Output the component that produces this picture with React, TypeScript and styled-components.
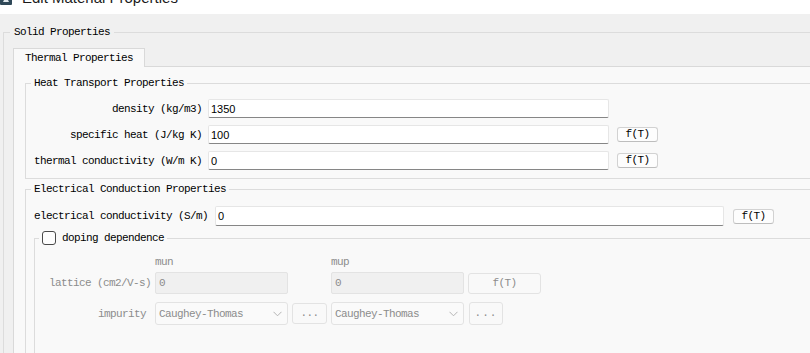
import styled, { createGlobalStyle } from 'styled-components'

const MONO = `"Liberation Mono", "DejaVu Sans Mono", monospace`
const SANS = `"Liberation Sans", Arial, sans-serif`

const GlobalStyle = createGlobalStyle`
  html, body {
    margin: 0;
    padding: 0;
    background: #f0f0f0;
    overflow: hidden;
  }
  body {
    width: 810px;
    height: 353px;
    font-family: ${MONO};
    font-size: 11px;
    letter-spacing: -0.6px;
    color: #000;
  }
`

export default function App() {
    return (
        <>
            <GlobalStyle />
            <TitleBar>
                <AppIcon width="12" height="12" viewBox="0 0 12 12" aria-hidden="true">
                    <rect x="0" y="0" width="12" height="12" rx="1" fill="#2f4858" />
                    <path d="M3 9 L6 3 L9 9 Z" fill="#dfe7ec" />
                </AppIcon>
                <TitleText>Edit Material Properties</TitleText>
            </TitleBar>

            <SolidGroup>
                <SolidLegend>Solid Properties</SolidLegend>
                <TabBar>
                    <Tab>Thermal Properties</Tab>
                    <TabFiller />
                </TabBar>
                <TabPane>
                    <HeatGroup>
                        <Legend>Heat Transport Properties</Legend>
                        <FormGrid $columns="168px 401px 41px">
                            <FieldLabel>density (kg/m3)</FieldLabel>
                            <TextField readOnly defaultValue="1350" />
                            <span />
                            <FieldLabel>specific heat (J/kg K)</FieldLabel>
                            <TextField readOnly defaultValue="100" />
                            <FnButton>f(T)</FnButton>
                            <FieldLabel>thermal conductivity (W/m K)</FieldLabel>
                            <TextField readOnly defaultValue="0" />
                            <FnButton>f(T)</FnButton>
                        </FormGrid>
                    </HeatGroup>

                    <ElectricalGroup>
                        <Legend>Electrical Conduction Properties</Legend>
                        <FormGrid $columns="174px 509px 41px" $gap={7} $rowHeight={20}>
                            <FieldLabel>electrical conductivity (S/m)</FieldLabel>
                            <TextField readOnly defaultValue="0" />
                            <FnButton>f(T)</FnButton>
                        </FormGrid>

                        <DopingGroup>
                            <DopingLegend>
                                <LegendInner>
                                    <CheckBox />
                                    doping dependence
                                </LegendInner>
                            </DopingLegend>
                            <DopingRow $height={12}>
                                <span />
                                <ColumnHead>mun</ColumnHead>
                                <span />
                                <ColumnHead>mup</ColumnHead>
                            </DopingRow>
                            <DopingRow $height={22} $top={4}>
                                <DimLabel>lattice (cm2/V-s)</DimLabel>
                                <DimField>0</DimField>
                                <span />
                                <DimField>0</DimField>
                                <DimButton>f(T)</DimButton>
                            </DopingRow>
                            <DopingRow $height={23} $top={8}>
                                <DimLabel $inset={5}>impurity</DimLabel>
                                <Combo>
                                    Caughey-Thomas
                                    <Chevron width="9" height="6" viewBox="0 0 9 6" aria-hidden="true">
                                        <path d="M0.5 0.8 L4.5 4.8 L8.5 0.8" fill="none" stroke="#b4b4b4" strokeWidth="1" />
                                    </Chevron>
                                </Combo>
                                <DimButton>...</DimButton>
                                <Combo>
                                    Caughey-Thomas
                                    <Chevron width="9" height="6" viewBox="0 0 9 6" aria-hidden="true">
                                        <path d="M0.5 0.8 L4.5 4.8 L8.5 0.8" fill="none" stroke="#b4b4b4" strokeWidth="1" />
                                    </Chevron>
                                </Combo>
                                <DimButton $narrow>...</DimButton>
                            </DopingRow>
                        </DopingGroup>
                    </ElectricalGroup>
                </TabPane>
            </SolidGroup>
        </>
    )
}


/*___Styling___*/

const TitleBar = styled.div`
    height: 14px;
    background: #fff;
    overflow: hidden;
    display: flex;
    align-items: flex-start;
`

const AppIcon = styled.svg`
    margin-top: -7px;
    flex: none;
`

const TitleText = styled.span`
    margin: -10px 0 0 10px;
    font-family: ${SANS};
    font-size: 15px;
    line-height: 15px;
    letter-spacing: 0;
    color: #1a1a1a;
`

const GroupBase = styled.fieldset`
    border: none;
    border-top: 1px solid #dcdcdc;
    border-left: 1px solid #dcdcdc;
    min-inline-size: 0;
    margin: 0;
`

const SolidGroup = styled(GroupBase)`
    margin: 12px 0 0 3px;
    padding: 9px 0 0 9px;
`

/* legends sit inside the fieldset's padding, so the offsets are negative */
const Legend = styled.legend`
    margin-left: -3px;
    padding: 0 3px;
    line-height: 13px;
`

const SolidLegend = styled(Legend)`
    margin-left: -3px;
    padding: 0 4px;
`

const TabBar = styled.div`
    display: flex;
    height: 19px;
`

const Tab = styled.div`
    background: #f9f9f9;
    border: 1px solid #d9d9d9;
    border-bottom: none;
    padding: 0 11px;
    line-height: 18px;
    white-space: nowrap;
`

const TabFiller = styled.div`
    flex: 1;
    border-bottom: 1px solid #d9d9d9;
`

const TabPane = styled.div`
    background: #f9f9f9;
    border-left: 1px solid #d9d9d9;
    padding: 10px 0 0 11px;
    height: 300px;
`

const HeatGroup = styled(GroupBase)`
    border-bottom: 1px solid #dcdcdc;
    padding: 9px 0 8px 8px;
`

const ElectricalGroup = styled(GroupBase)`
    margin-top: 4px;
    padding: 10px 0 0 8px;
    height: 200px;
`

const FormGrid = styled.div<{ $columns: string; $gap?: number; $rowHeight?: number }>`
    display: grid;
    grid-template-columns: ${p => p.$columns};
    grid-auto-rows: ${p => p.$rowHeight ?? 19}px;
    column-gap: ${p => p.$gap ?? 6}px;
    row-gap: 7px;
    align-items: center;
`

const FieldLabel = styled.span`
    text-align: right;
    white-space: nowrap;
`

const TextField = styled.input`
    box-sizing: border-box;
    height: 100%;
    width: 100%;
    margin: 0;
    padding: 0 2px;
    background: #fff;
    border: 1px solid #e6e6e6;
    border-bottom-color: #868686;
    border-radius: 2px;
    font-family: ${SANS};
    font-size: 11px;
    color: #000;
    outline: none;
`

const FnButton = styled.button`
    box-sizing: border-box;
    height: 15px;
    width: 41px;
    margin: 0 0 0 2px;
    padding: 0;
    background: #fdfdfd;
    border: 1px solid #d2d2d2;
    border-bottom-color: #bdbdbd;
    border-radius: 3px;
    font-family: ${MONO};
    font-size: 11px;
    letter-spacing: -0.6px;
    line-height: 13px;
    color: #000;
`

const DopingGroup = styled(GroupBase)`
    margin-top: 5px;
    padding: 11px 0 0 0;
    height: 150px;
`

const DopingLegend = styled.legend`
    margin-left: 4px;
    padding: 0 3px;
    line-height: 14px;
`

const LegendInner = styled.span`
    display: flex;
    align-items: center;
    gap: 6px;
`

const CheckBox = styled.span`
    box-sizing: border-box;
    width: 14px;
    height: 14px;
    border: 1px solid #4a4a4a;
    border-radius: 3px;
    background: #fdfdfd;
`

const DopingRow = styled.div<{ $height: number; $top?: number }>`
    display: grid;
    grid-template-columns: 116px 133px 35px 133px 73px;
    column-gap: 4px;
    height: ${p => p.$height}px;
    margin-top: ${p => p.$top ?? 0}px;
    align-items: center;
    color: #8c8c8c;
`

const ColumnHead = styled.span`
    line-height: 12px;
`

const DimLabel = styled.span<{ $inset?: number }>`
    text-align: right;
    white-space: nowrap;
    padding-right: ${p => p.$inset ?? 0}px;
`

const DimField = styled.div`
    box-sizing: border-box;
    height: 22px;
    padding: 0 3px;
    line-height: 20px;
    background: #f0f0f0;
    border: 1px solid #e3e3e3;
    border-radius: 2px;
`

const DimButton = styled.div<{ $narrow?: boolean }>`
    box-sizing: border-box;
    height: ${p => (p.$narrow ? 23 : 21)}px;
    width: ${p => (p.$narrow ? '34px' : '100%')};
    margin-left: ${p => (p.$narrow ? 1 : 0)}px;
    line-height: ${p => (p.$narrow ? 21 : 19)}px;
    text-align: center;
    background: #f9f9f9;
    border: 1px solid #e3e3e3;
    border-radius: 3px;
    letter-spacing: ${p => (p.$narrow ? '1px' : '-0.6px')};
`

const Combo = styled.div`
    box-sizing: border-box;
    height: 23px;
    padding: 0 5px 0 3px;
    display: flex;
    align-items: center;
    justify-content: space-between;
    background: #fafafa;
    border: 1px solid #e3e3e3;
    border-radius: 3px;
    white-space: nowrap;
`

const Chevron = styled.svg`
    flex: none;
`
